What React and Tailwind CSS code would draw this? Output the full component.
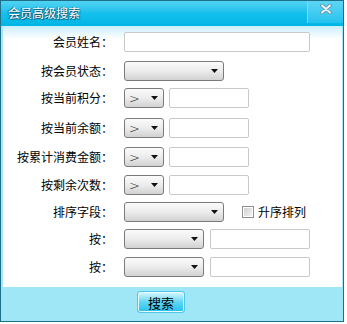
import React from 'react';

// Ventana "会员高级搜索" estilo WinForms azul
const font = { fontFamily: '"Noto Sans CJK SC", "Noto Sans", sans-serif' };

const Arrow = () => (
    <svg width="7" height="4" viewBox="0 0 7 4" className="block">
        <path d="M0 0H7L3.5 4Z" fill="#111" />
    </svg>
);

// Combo con gradiente gris
function Combo({ className, text }) {
    return (
        <div className={`h-[20px] border border-[#7b7b7b] rounded-[3px] bg-linear-to-b from-[#fbfbfb] via-[#ececec] to-[#d2d2d2] flex items-center justify-between pl-[4px] pr-[5px] ${className}`}>
            <span className="text-[13px] leading-none font-light text-[#222] font-['DejaVu_Sans',sans-serif]">{text}</span>
            <Arrow />
        </div>
    );
}

function Field({ className }) {
    return <div className={`h-[20px] border border-[#c9c9c9] rounded-[2px] bg-white ${className}`}></div>;
}

function Row({ label, mt, children }) {
    return (
        <div className={`flex items-center ${mt}`}>
            <div className="w-[110px] text-right text-[12px] leading-none text-black">{label}</div>
            <div className="ml-[11px] flex items-center">{children}</div>
        </div>
    );
}

export default function App() {
    return (
        <div className="w-[347px] h-[324px] bg-white" style={font}>
            <div className="w-[344px] h-[322px] border border-[#1f6f88] flex flex-col">
                {/* Barra de título */}
                <div className="h-[25px] bg-linear-to-b from-[#4fd3f3] via-[#14bfec] to-[#00b6e6] flex items-start justify-between">
                    <span className="ml-[7px] mt-[6px] text-[12px] leading-none text-white [text-shadow:1px_1px_1px_#0b4f66,-1px_0_1px_#0b4f66]">会员高级搜索</span>
                    <div className="w-[36px] h-[22px] border-l border-[#7fd9f1] bg-linear-to-b from-[#5cd6f4] to-[#21c2ee] flex items-start justify-center pt-[3px]">
                        <svg width="12" height="10" viewBox="0 0 12 10">
                            <path d="M2 1.5L10 8.5M10 1.5L2 8.5" stroke="#5d8d9c" strokeWidth="3.6" strokeLinecap="round" />
                            <path d="M2 1.5L10 8.5M10 1.5L2 8.5" stroke="#eef6f8" strokeWidth="2" strokeLinecap="round" />
                        </svg>
                    </div>
                </div>

                {/* Cuerpo */}
                <div className="flex-1 border-l-[2px] border-r-[1px] border-[#a6e6f6] bg-linear-to-b from-[#c9effa] via-white to-white bg-[length:100%_26px] bg-no-repeat bg-white flex flex-col pt-[6px]">
                    <Row label="会员姓名：" mt="mt-0">
                        <Field className="w-[186px]" />
                    </Row>
                    <Row label="按会员状态：" mt="mt-[9px]">
                        <Combo className="w-[100px]" text="" />
                    </Row>
                    <Row label="按当前积分：" mt="mt-[7px]">
                        <Combo className="w-[40px]" text=">" />
                        <Field className="w-[80px] ml-[5px]" />
                    </Row>
                    <Row label="按当前余额：" mt="mt-[10px]">
                        <Combo className="w-[40px]" text=">" />
                        <Field className="w-[80px] ml-[5px]" />
                    </Row>
                    <Row label="按累计消费金额：" mt="mt-[9px]">
                        <Combo className="w-[40px]" text=">" />
                        <Field className="w-[80px] ml-[5px]" />
                    </Row>
                    <Row label="按剩余次数：" mt="mt-[8px]">
                        <Combo className="w-[40px]" text=">" />
                        <Field className="w-[80px] ml-[5px]" />
                    </Row>
                    <Row label="排序字段：" mt="mt-[7px]">
                        <Combo className="w-[100px]" text="" />
                        <div className="ml-[18px] w-[12px] h-[12px] border border-[#8e8e8e] bg-white p-[1px]">
                            <div className="w-full h-full bg-linear-to-br from-[#d0d0d0] to-[#f4f4f4]"></div>
                        </div>
                        <span className="ml-[4px] text-[12px] leading-none text-black">升序排列</span>
                    </Row>
                    <Row label="按：" mt="mt-[7px]">
                        <Combo className="w-[80px]" text="" />
                        <Field className="w-[100px] ml-[6px]" />
                    </Row>
                    <Row label="按：" mt="mt-[8px]">
                        <Combo className="w-[80px]" text="" />
                        <Field className="w-[100px] ml-[6px]" />
                    </Row>
                </div>

                {/* Pie */}
                <div className="h-[34px] bg-[#9fe6f7] flex items-start pt-[4px]">
                    <button className="ml-[136px] w-[48px] h-[22px] rounded-[3px] border border-[#4fc6ea] bg-linear-to-b from-[#d9f8fe] via-[#5ed5f4] to-[#1cc0ee] shadow-[inset_0_0_0_1px_#e8fbff] text-[13px] leading-none text-black flex items-center justify-center">
                        搜索
                    </button>
                </div>
            </div>
        </div>
    );
}
